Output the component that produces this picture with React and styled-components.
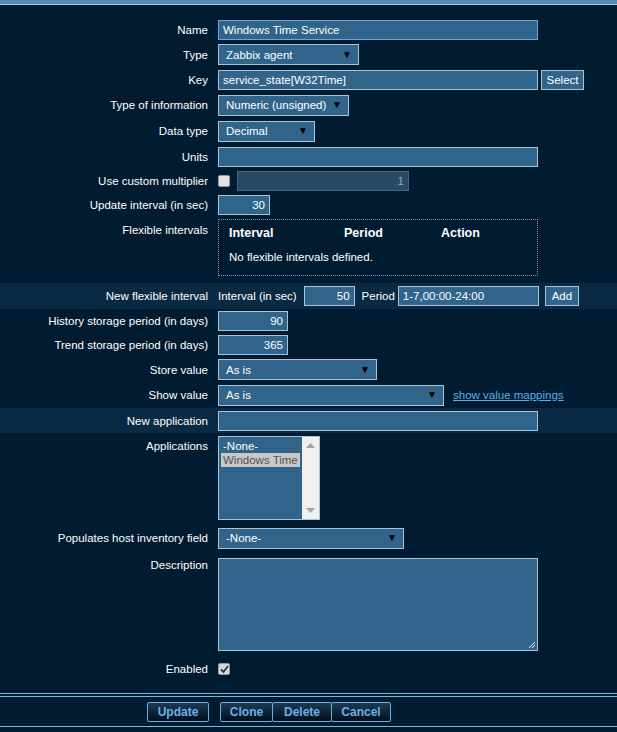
import React from 'react';
import styled, { createGlobalStyle } from 'styled-components';

const GlobalStyle = createGlobalStyle`
  html, body {
    margin: 0;
    padding: 0;
    background: #011c30;
  }
  body {
    font-family: "Liberation Sans", Arial, sans-serif;
    font-size: 11.5px;
    color: #ffffff;
  }
`;

const Page = styled.div`
  width: 617px;
  height: 732px;
  overflow: hidden;
  background: #011c30;
`;

const TopBar = styled.div`
  height: 4px;
  background: #5a8bae;
  border-bottom: 1px solid #8fcdf0;
`;

const Form = styled.div`
  padding-top: 12px;
`;

const Row = styled.div`
  display: flex;
  align-items: ${(p) => (p.$top ? 'flex-start' : 'center')};
  box-sizing: border-box;
  height: ${(p) => p.$h}px;
  padding-top: ${(p) => p.$pt || 0}px;
  background: ${(p) => (p.$band ? '#0a2a44' : 'transparent')};
`;

const Label = styled.div`
  flex-shrink: 0;
  box-sizing: border-box;
  width: 218px;
  padding-right: 10px;
  padding-top: ${(p) => p.$off || 0}px;
  text-align: right;
  line-height: 14px;
  white-space: nowrap;
`;

const Field = styled.div`
  display: flex;
  align-items: center;
  gap: ${(p) => p.$gap || 0}px;
`;

const TextInput = styled.input`
  box-sizing: border-box;
  width: ${(p) => p.$w}px;
  height: 20px;
  margin: 0;
  padding: 0 4px;
  background: ${(p) => (p.disabled ? '#294a62' : '#30648a')};
  border: 1px solid ${(p) => (p.disabled ? '#3f6783' : p.$focus ? '#6ea6d8' : '#a6c5d8')};
  color: ${(p) => (p.disabled ? '#9aa9b4' : '#ffffff')};
  font: inherit;
  text-align: ${(p) => (p.$right ? 'right' : 'left')};
  outline: none;
`;

const SelectBox = styled.div`
  box-sizing: border-box;
  width: ${(p) => p.$w}px;
  height: 21px;
  display: flex;
  align-items: center;
  justify-content: space-between;
  padding: 0 6px 0 7px;
  background: #30648a;
  border: 1px solid #a6c5d8;
  white-space: nowrap;
`;

const Arrow = styled.span`
  color: #000000;
  font-size: 10px;
  line-height: 10px;
`;

const SmallButton = styled.button`
  box-sizing: border-box;
  width: ${(p) => p.$w}px;
  height: 20px;
  margin: 0;
  padding: 0;
  background: #30648a;
  border: 1px solid #a6c5d8;
  color: #ffffff;
  font: inherit;
`;

const Box = styled.span`
  display: inline-flex;
  align-items: center;
  justify-content: center;
  box-sizing: border-box;
  width: 12px;
  height: 12px;
  background: ${(p) => (p.$checked ? '#d8d8d8' : '#e2e2e2')};
  border: 1px solid #9a9a9a;
  border-radius: 2px;
`;

const Spacer = styled.span`
  width: ${(p) => p.$w}px;
`;

const Inline = styled.span`
  color: #ffffff;
`;

const FlexTable = styled.div`
  box-sizing: border-box;
  width: 320px;
  height: 57px;
  border: 1px dotted #7f9bb0;
  padding: 6px 10px;
`;

const FlexHead = styled.div`
  display: grid;
  grid-template-columns: 115px 97px auto;
  font-weight: bold;
  font-size: 12.5px;
  line-height: 14px;
`;

const FlexEmpty = styled.div`
  margin-top: 10px;
  line-height: 14px;
`;

const ListBox = styled.div`
  box-sizing: border-box;
  width: 102px;
  height: 84px;
  display: flex;
  background: #30648a;
  border: 1px solid #a6c5d8;
`;

const ListItems = styled.div`
  flex: 1;
  overflow: hidden;
  padding: 2px 0 0 2px;
`;

const ListItem = styled.div`
  display: inline-block;
  white-space: nowrap;
  line-height: 14px;
  padding: 0 2px;
  background: ${(p) => (p.$selected ? '#c8c8c8' : 'transparent')};
  color: ${(p) => (p.$selected ? '#545454' : '#ffffff')};
`;

const ScrollBar = styled.div`
  width: 17px;
  display: flex;
  flex-direction: column;
  justify-content: space-between;
  align-items: center;
  padding: 6px 0;
  box-sizing: border-box;
  background: #f0f0f0;
`;

const TextArea = styled.div`
  position: relative;
  box-sizing: border-box;
  width: 320px;
  height: 93px;
  background: #30648a;
  border: 1px solid #a6c5d8;
`;

const Grip = styled.svg`
  position: absolute;
  right: 1px;
  bottom: 1px;
`;

const Link = styled.a`
  margin-left: 9px;
  color: #58b0e8;
  text-decoration: underline;
`;

const Footer = styled.div`
  margin-top: 11px;
  border-top: 4px double #78b8dc;
  border-bottom: 1px solid #78b8dc;
  padding: 5px 0 4px;
  display: flex;
  align-items: center;
`;

const FooterLeft = styled.div`
  width: 209px;
  display: flex;
  justify-content: flex-end;
`;

const ButtonGroup = styled.div`
  display: flex;
  margin-left: 11px;
`;

const FootButton = styled.button`
  box-sizing: border-box;
  width: ${(p) => p.$w}px;
  height: 20px;
  margin: 0 0 0 ${(p) => (p.$joined ? -1 : 0)}px;
  padding: 0;
  background: linear-gradient(#1b3b55, #010f1c);
  border: 1px solid #6aaedb;
  border-radius: 2px;
  color: #6cb0e2;
  font-family: "Liberation Sans", Arial, sans-serif;
  font-size: 12px;
  font-weight: bold;
`;

const Select = ({ w, children }) => (
  <SelectBox $w={w}>
    <span>{children}</span>
    <Arrow>▼</Arrow>
  </SelectBox>
);

const Check = ({ checked }) => (
  <Box $checked={checked}>
    {checked && (
      <svg width="9" height="9" viewBox="0 0 9 9">
        <path d="M1 4.5 L3.5 7 L8 1" stroke="#333" strokeWidth="1.8" fill="none" />
      </svg>
    )}
  </Box>
);

const Tri = ({ up }) => (
  <svg width="9" height="5" viewBox="0 0 9 5">
    <path d={up ? 'M0 5 L4.5 0 L9 5 Z' : 'M0 0 L4.5 5 L9 0 Z'} fill="#a3a3a3" />
  </svg>
);

const App = () => {
  return (
    <Page>
      <GlobalStyle />
      <TopBar />
      <Form>
        <Row $h={25}>
          <Label>Name</Label>
          <TextInput $w={320} $focus readOnly value="Windows Time Service" />
        </Row>
        <Row $h={25}>
          <Label>Type</Label>
          <Select w={141}>Zabbix agent</Select>
        </Row>
        <Row $h={25}>
          <Label>Key</Label>
          <Field $gap={3}>
            <TextInput $w={320} readOnly value="service_state[W32Time]" />
            <SmallButton $w={43}>Select</SmallButton>
          </Field>
        </Row>
        <Row $h={26}>
          <Label>Type of information</Label>
          <Select w={131}>Numeric (unsigned)</Select>
        </Row>
        <Row $h={26}>
          <Label>Data type</Label>
          <Select w={97}>Decimal</Select>
        </Row>
        <Row $h={25}>
          <Label>Units</Label>
          <TextInput $w={320} readOnly value="" />
        </Row>
        <Row $h={24}>
          <Label>Use custom multiplier</Label>
          <Field $gap={7}>
            <Check />
            <TextInput $w={172} $right disabled value="1" />
          </Field>
        </Row>
        <Row $h={24}>
          <Label>Update interval (in sec)</Label>
          <TextInput $w={52} $right readOnly value="30" />
        </Row>
        <Row $h={66} $top $pt={2}>
          <Label $off={4}>Flexible intervals</Label>
          <FlexTable>
            <FlexHead>
              <span>Interval</span>
              <span>Period</span>
              <span>Action</span>
            </FlexHead>
            <FlexEmpty>No flexible intervals defined.</FlexEmpty>
          </FlexTable>
        </Row>
        <Row $h={26} $band>
          <Label>New flexible interval</Label>
          <Field>
            <Inline>Interval (in sec)</Inline>
            <Spacer $w={7} />
            <TextInput $w={51} $right readOnly value="50" />
            <Spacer $w={7} />
            <Inline>Period</Inline>
            <Spacer $w={3} />
            <TextInput $w={141} readOnly value="1-7,00:00-24:00" />
            <Spacer $w={6} />
            <SmallButton $w={34}>Add</SmallButton>
          </Field>
        </Row>
        <Row $h={24}>
          <Label>History storage period (in days)</Label>
          <TextInput $w={70} $right readOnly value="90" />
        </Row>
        <Row $h={24}>
          <Label>Trend storage period (in days)</Label>
          <TextInput $w={70} $right readOnly value="365" />
        </Row>
        <Row $h={25}>
          <Label>Store value</Label>
          <Select w={159}>As is</Select>
        </Row>
        <Row $h={26}>
          <Label>Show value</Label>
          <Field>
            <Select w={226}>As is</Select>
            <Link href="#">show value mappings</Link>
          </Field>
        </Row>
        <Row $h={25} $band>
          <Label>New application</Label>
          <TextInput $w={320} readOnly value="" />
        </Row>
        <Row $h={91} $top $pt={3}>
          <Label $off={3}>Applications</Label>
          <ListBox>
            <ListItems>
              <ListItem>-None-</ListItem>
              <ListItem $selected>Windows Time</ListItem>
            </ListItems>
            <ScrollBar>
              <Tri up />
              <Tri />
            </ScrollBar>
          </ListBox>
        </Row>
        <Row $h={28}>
          <Label>Populates host inventory field</Label>
          <Select w={186}>-None-</Select>
        </Row>
        <Row $h={104} $top $pt={6}>
          <Label $off={0}>Description</Label>
          <TextArea>
            <Grip width="9" height="9" viewBox="0 0 9 9">
              <path d="M8 2 L2 8 M8 5 L5 8" stroke="#e6eef4" strokeWidth="1" />
            </Grip>
          </TextArea>
        </Row>
        <Row $h={26}>
          <Label>Enabled</Label>
          <Check checked />
        </Row>
      </Form>
      <Footer>
        <FooterLeft>
          <FootButton $w={62}>Update</FootButton>
        </FooterLeft>
        <ButtonGroup>
          <FootButton $w={53}>Clone</FootButton>
          <FootButton $w={60} $joined>Delete</FootButton>
          <FootButton $w={60} $joined>Cancel</FootButton>
        </ButtonGroup>
      </Footer>
    </Page>
  );
};

export default App;
